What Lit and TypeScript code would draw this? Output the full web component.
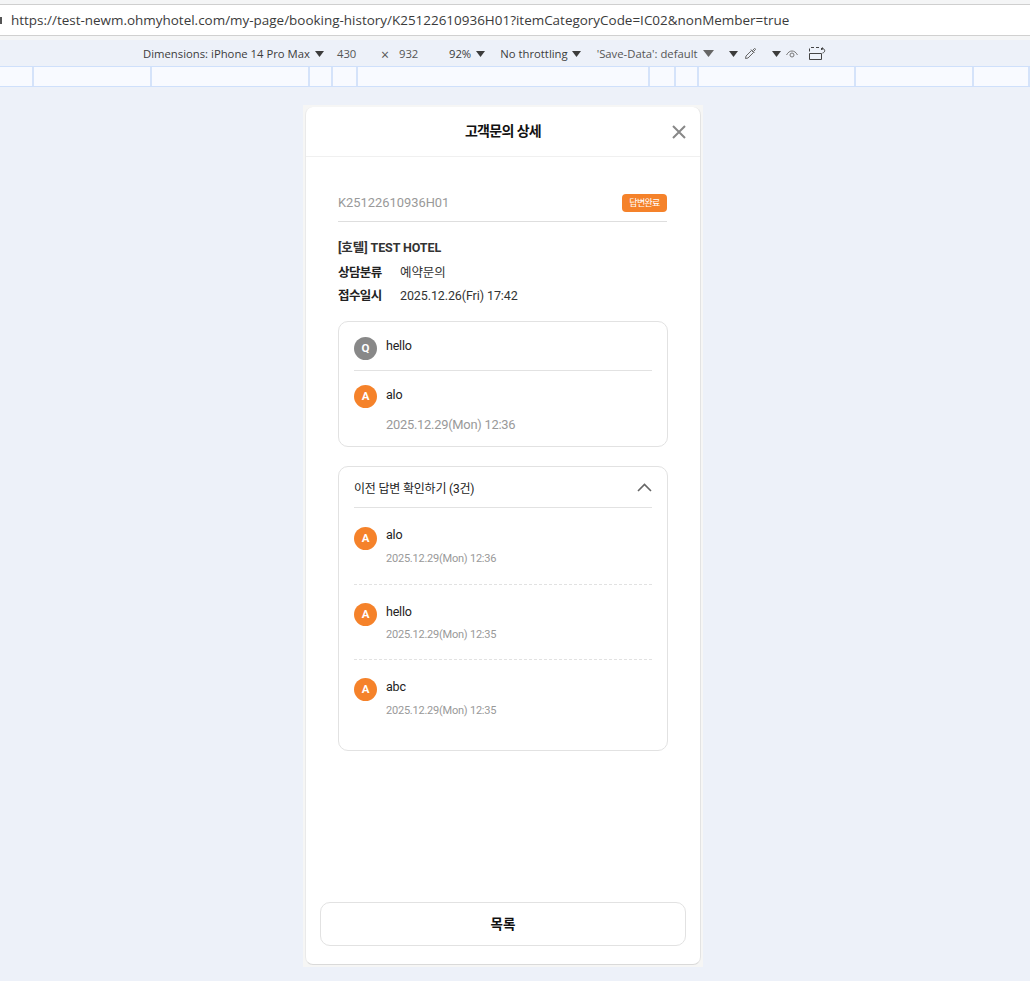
import { LitElement, html, css } from "lit";
import { customElement } from "lit/decorators.js";

const caret = html`<svg class="caret" width="9" height="6" viewBox="0 0 9 6"><path d="M0 0h9L4.500 6z" fill="#3c3c3c"/></svg>`;
const rulerWidths = [34, 118, 158, 23, 25, 292, 26, 23, 157, 118, 56];

@customElement("app-root")
export class AppRoot extends LitElement {
  static styles = css`
    :host { display: block; width: 1030px; height: 981px; overflow: hidden; background: #edf1f9;
      font-family: Roboto, "Noto Sans CJK KR", sans-serif; color: #222; }
    * { box-sizing: border-box; }
    .chrome-top { height: 40px; background: #f4f5f6; padding-top: 4px; }
    .url { height: 32px; background: #fff; border-top: 1px solid #cfcfcf; border-bottom: 1px solid #d0d0d0;
      font: 13.46px/30px "Open Sans", sans-serif; color: #3b3b3b; display: flex; align-items: center; white-space: nowrap; }
    .stub { width: 2px; height: 7px; background: #555; margin-right: 9px; flex: none; }
    .tools { height: 26px; display: flex; align-items: center; padding: 1px 0 0 143px;
      font: 11.3px/16px "Open Sans", sans-serif; color: #3c3c3c; white-space: nowrap; }
    .tools span { display: block; flex: none; }
    .caret { flex: none; margin-left: 5px; }
    .dim { width: 44px; margin-left: 13px; color: #555; }
    .x { width: 18px; margin-top: 3px; color: #555; font-size: 14px; }
    .h { width: 50px; color: #555; }
    .thr { margin-left: 15px; }
    .thr-c { margin-left: 4px; }
    .save { margin-left: 16px; color: #555; }
    .mc { margin-left: 15px; }
    .mc2 { margin-left: 15px; }
    .pip { margin-left: 6px; flex: none; }
    .eye { margin-left: 5px; flex: none; }
    .dev { margin-left: 11px; flex: none; }
    .ruler { height: 21px; display: flex; background: #f8faff; border-top: 1px solid #cfe0fb; border-bottom: 1px solid #cfe0fb; }
    .ruler div { height: 19px; border-right: 2px solid #d5e3fa; flex: none; }
    .stage { display: flex; padding: 18px 0 0 303px; }
    .halo { width: 400px; height: 862px; padding: 2px; background: #f6f6f5; }
    .card { width: 396px; height: 858px; background: #fff; border-radius: 8px; border-right: 1px solid #e3e3e3;
      border-bottom: 1px solid #dadada; border-left: 1px solid #eaeaea; display: flex; flex-direction: column; }
    .head { height: 50px; flex: none; border-bottom: 1px solid #f0f0f0; display: flex; align-items: center; justify-content: center; position: relative; }
    .title { font-size: 14px; font-weight: 700; color: #111; letter-spacing: -0.65px; margin-top: -4px; }
    .close { position: absolute; right: 13px; top: 17px; }
    .body { flex: 1; padding: 0 32px; }
    .idrow { height: 65px; padding: 29px 0 0; margin-right: 1px; border-bottom: 1px solid #dedede; display: flex; justify-content: space-between; align-items: flex-start; }
    .id { font-size: 12.88px; line-height: 19px; color: #999; margin-top: 7px; }
    .badge { width: 45px; height: 18px; margin-top: 8px; background: #f5822a; color: #fff; border-radius: 4px; font-size: 9px; line-height: 18px; text-align: center; letter-spacing: -0.7px; }
    .hotel { margin-top: 16px; font-size: 12.5px; line-height: 20px; font-weight: 700; color: #333; letter-spacing: -0.1px; }
    .meta { margin-top: 3px; display: flex; font-size: 12.5px; line-height: 20px; color: #333; letter-spacing: -0.1px; }
    .meta.first { margin-top: 5px; }
    .meta b { width: 62px; flex: none; letter-spacing: -0.6px; color: #222; }
    .box { border: 1px solid #e2e2e2; border-radius: 10px; padding: 0 15px; }
    .box1 { margin-top: 15px; height: 126px; }
    .row { display: flex; gap: 9px; }
    .av { width: 23px; height: 23px; border-radius: 50%; color: #fff; font-size: 11.5px; font-weight: 700; line-height: 23px; text-align: center; flex: none; background: #f5822a; }
    .av.q { background: #888; }
    .msg { font-size: 12.5px; line-height: 18px; color: #222; letter-spacing: -0.2px; margin-top: 1px; }
    .q-row .msg { margin-top: 0; }
    .q-row { padding-top: 15px; height: 49px; border-bottom: 1px solid #e2e2e2; }
    .a-row { padding-top: 14px; }
    .date { font-size: 12.88px; line-height: 18px; color: #999; margin: 8px 0 0 32px; letter-spacing: -0.25px; }
    .box2 { margin-top: 19px; height: 285px; }
    .acc { height: 41px; border-bottom: 1px solid #e2e2e2; display: flex; justify-content: space-between; align-items: center; font-size: 12px; color: #222; letter-spacing: -0.2px; }
    .item { height: 75px; padding-top: 18px; border-bottom: 1px dashed #e2e2e2; }
    .item .msg { margin-top: 0; }
    .item.first { height: 77px; padding-top: 19px; }
    .item.first .msg { margin-top: -1px; }
    .item:last-child { border-bottom: 0; }
    .item .date { font-size: 11.04px; line-height: 16px; margin: 1px 0 0 32px; letter-spacing: -0.24px; }
    .item:last-child .date { margin-top: 2px; }
    .chev { flex: none; }
    .foot { padding: 0 14px 18px 14px; }
    .btn { height: 44px; padding-bottom: 2px; border: 1px solid #e2e2e2; border-radius: 10px; display: flex; align-items: center; justify-content: center; font-size: 13.5px; font-weight: 700; color: #111; background: #fff; }
  `;

  item(msg: string, date: string, first = false) {
    return html`<div class="item ${first ? "first" : ""}"><div class="row"><div class="av">A</div><div class="msg">${msg}</div></div><div class="date">${date}</div></div>`;
  }

  render() {
    return html`
      <div class="chrome-top"><div class="url"><i class="stub"></i>https://test-newm.ohmyhotel.com/my-page/booking-history/K25122610936H01?itemCategoryCode=IC02&amp;nonMember=true</div></div>
      <div class="tools">
        <span>Dimensions: iPhone 14 Pro Max</span>${caret}
        <span class="dim">430</span><span class="x">×</span><span class="h">932</span>
        <span>92%</span>${caret}
        <span class="thr">No throttling</span><svg class="caret thr-c" width="9" height="6" viewBox="0 0 9 6"><path d="M0 0h9L4.500 6z" fill="#3c3c3c"/></svg>
        <span class="save">'Save-Data': default</span>
        <svg class="caret" width="11" height="7" viewBox="0 0 11 7"><path d="M0 0h11L5.500 7z" fill="#666"/></svg>
        <svg class="caret mc" width="9" height="6" viewBox="0 0 9 6"><path d="M0 0h9L4.500 6z" fill="#3c3c3c"/></svg>
        <svg class="pip" width="13" height="13" viewBox="0 0 13 13" fill="none" stroke="#666"><path d="M1.500 11.500l.5-2.500 5.500-5.500 2 2-5.500 5.500zM7 2.500l3.500 3.500M8.500 3.500l2-2a1 1 0 0 1 1 1l-2 2"/></svg>
        <svg class="caret mc2" width="9" height="6" viewBox="0 0 9 6"><path d="M0 0h9L4.500 6z" fill="#3c3c3c"/></svg>
        <svg class="eye" width="12" height="10" viewBox="0 0 12 10" fill="none" stroke="#777"><path d="M.5 6C2 3.200 4 2 6 2s4 1.200 5.500 4"/><circle cx="6" cy="6" r="2"/></svg>
        <svg class="dev" width="17" height="13" viewBox="0 0 17 13" fill="none" stroke="#444"><path d="M.5 6.500h12v6H.5zM.5 4.500v-3M2 .5h3M7 .5h3M12.500 1v2"/><path d="M13 1.500c3.500 0 3.500 4 .5 4.500M14 .5l-1.200 1 1.200 1"/></svg>
      </div>
      <div class="ruler">${rulerWidths.map((w) => html`<div style="width:${w}px"></div>`)}</div>
      <div class="stage"><div class="halo"><div class="card">
        <div class="head">
          <div class="title">고객문의 상세</div>
          <svg class="close" width="16" height="16" viewBox="0 0 16 16" fill="none" stroke="#888" stroke-width="2"><path d="M2 2l12 12M14 2L2 14"/></svg>
        </div>
        <div class="body">
          <div class="idrow"><div class="id">K25122610936H01</div><div class="badge">답변완료</div></div>
          <div class="hotel">[호텔] TEST HOTEL</div>
          <div class="meta first"><b>상담분류</b><span>예약문의</span></div>
          <div class="meta"><b>접수일시</b><span>2025.12.26(Fri) 17:42</span></div>
          <div class="box box1">
            <div class="row q-row"><div class="av q">Q</div><div class="msg">hello</div></div>
            <div class="row a-row"><div class="av">A</div><div class="msg">alo</div></div>
            <div class="date">2025.12.29(Mon) 12:36</div>
          </div>
          <div class="box box2">
            <div class="acc"><span>이전 답변 확인하기 (3건)</span>
              <svg class="chev" width="15" height="9" viewBox="0 0 15 9" fill="none" stroke="#666" stroke-width="1.600"><path d="M1 8l6.500-6.500L14 8"/></svg></div>
            ${this.item("alo", "2025.12.29(Mon) 12:36", true)}
            ${this.item("hello", "2025.12.29(Mon) 12:35")}
            ${this.item("abc", "2025.12.29(Mon) 12:35")}
          </div>
        </div>
        <div class="foot"><div class="btn">목록</div></div>
      </div></div></div>`;
  }
}
